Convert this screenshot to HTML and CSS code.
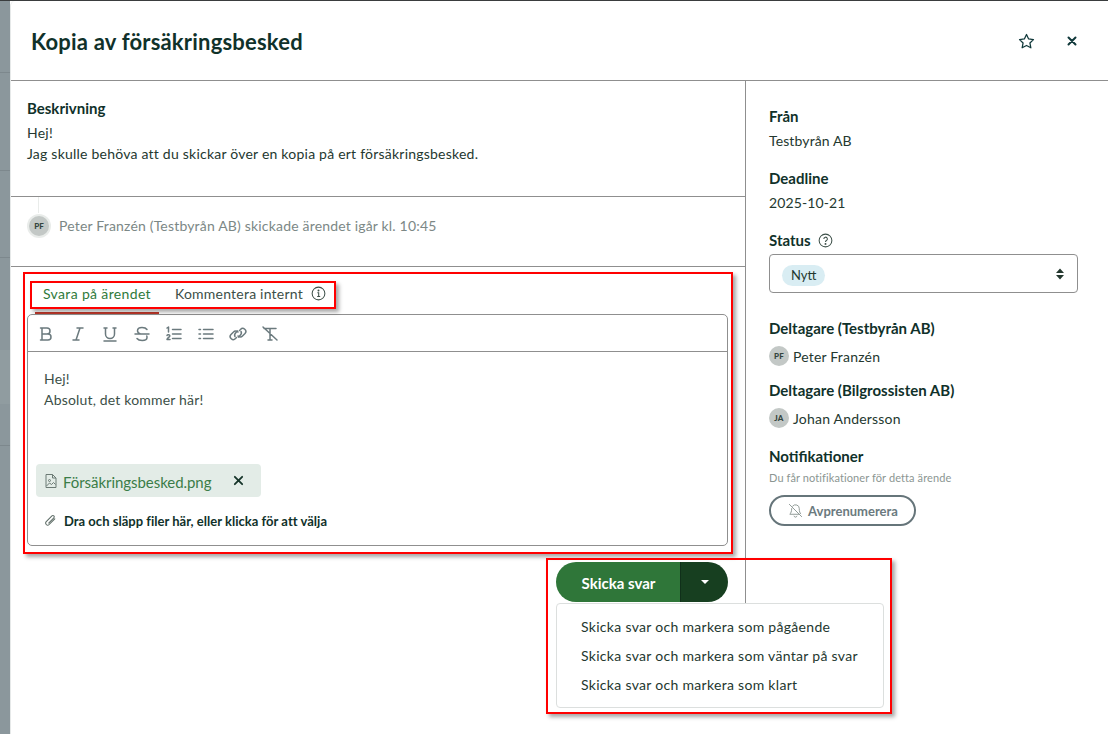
FILE: index.html
```html
<!DOCTYPE html>
<html lang="sv">
<head>
<meta charset="utf-8">
<title>Kopia av försäkringsbesked</title>
<link rel="stylesheet" href="styles.css">
</head>
<body>
<div class="backdrop">
  <div class="bd bd1"></div>
  <div class="bd bd2"></div>
  <div class="bd bd3"></div>
  <div class="bd bd4"></div>
  <div class="bd bd5"></div>
  <div class="bd bd6"></div>
</div>
<main class="modal">
  <header class="modal-head">
    <h1>Kopia av försäkringsbesked</h1>
    <div class="head-actions">
      <svg class="star" width="19" height="19" viewBox="0 0 24 24" fill="none" stroke="#10383a" stroke-width="1.6" stroke-linejoin="round"><path d="M12 3.200l2.700 5.600 6.100.8-4.500 4.200 1.200 6.100L12 17l-5.500 2.900 1.200-6.100-4.500-4.200 6.100-.8z"/></svg>
      <svg class="close" width="10" height="10" viewBox="0 0 10 10" stroke="#10383a" stroke-width="2" stroke-linecap="round"><path d="M1.500 1.500l7 7M8.500 1.500l-7 7"/></svg>
    </div>
  </header>
  <div class="modal-body">
    <section class="main-col">
      <div class="desc">
        <h2>Beskrivning</h2>
        <p>Hej!<br>Jag skulle behöva att du skickar över en kopia på ert försäkringsbesked.</p>
      </div>
      <div class="log">
        <span class="avatar avatar-log">PF</span>
        <span class="log-text">Peter Franzén (Testbyrån AB) skickade ärendet igår kl. 10:45</span>
      </div>
      <div class="reply">
        <div class="tabs">
          <span class="tab active">Svara på ärendet</span>
          <span class="tab second">Kommentera internt</span>
          <svg class="info" width="15" height="15" viewBox="0 0 16 16" fill="none" stroke="#3c4f48" stroke-width="1.1"><circle cx="8" cy="8" r="6.800"/><path d="M6.800 7.200H8.200V11.200M6.600 11.200H9.800" /><circle cx="8" cy="4.900" r=".5" fill="#3c4f48"/></svg>
        </div>
        <div class="editor">
          <div class="toolbar">
            <svg class="tool" viewBox="0 0 18 18"><path d="M5 3h5a3 3 0 0 1 0 6H5zM5 9h6a3 3 0 0 1 0 6H5zM3.500 3H5M3.500 15H5"/></svg>
            <svg class="tool" viewBox="0 0 18 18"><path d="M8 3h6M4 15h6M11 3L7 15"/></svg>
            <svg class="tool" viewBox="0 0 18 18"><path d="M4.500 3v6a4.500 4.500 0 0 0 9 0V3M3 3h3M12 3h3M3 16h12"/></svg>
            <svg class="tool" viewBox="0 0 18 18"><path d="M14 4.500C13 3 11 2.500 9 2.500c-2.500 0-4.500 1.200-4.500 3.200 0 1.500 1 2.500 3 3.300M2 9h14M13.800 11c.2 .5 .2 1 .2 1.500 0 2-2 3-4.800 3-2.200 0-4.200-.6-5.200-2"/></svg>
            <svg class="tool" viewBox="0 0 18 18"><path d="M7.500 4.500H16M7.500 9H16M7.500 13.500H16"/><path d="M2 3l1.500-1v5M2 10.500c.3-1 3-1 2.800.5 0 1-2.800 2-2.800 3.500h3"/></svg>
            <svg class="tool" viewBox="0 0 18 18"><path d="M6.500 4.500H16M6.500 9H16M6.500 13.500H16"/><path d="M2 4.500h1.500M2 9h1.500M2 13.500h1.500"/></svg>
            <svg class="tool" viewBox="0 0 18 18"><path d="M7.500 12.500l-1 1a3 3 0 0 1-4.500-4l2.500-2.500a3 3 0 0 1 4.500 0M10.500 5.500l1-1a3 3 0 0 1 4.500 4L13.500 11a3 3 0 0 1-4.500 0"/><path d="M6 11.500c-1-1.500 0-3 1-4l1.500-1.500M12 6.500c1 1.500 0 3-1 4L9.500 12"/></svg>
            <svg class="tool" viewBox="0 0 18 18"><path d="M3 3.500h12M9 3.500V15M7 15h4M2 2l14 13"/></svg>
          </div>
          <div class="editor-text">
            <p>Hej!<br>Absolut, det kommer här!</p>
          </div>
          <div class="attachment">
            <svg class="file-icon" width="14" height="16" viewBox="0 0 14 16" fill="none" stroke="#6b7a74" stroke-width="1"><path d="M2 1.500h6.500L12 5v9.500H2zM8.500 1.500V5H12"/><circle cx="5.500" cy="7.500" r="1"/><path d="M2.500 13l3-3 2 1.500 2-2 2 2"/></svg>
            <span class="file-name">Försäkringsbesked.png</span>
            <svg class="file-x" width="11" height="11" viewBox="0 0 12 12" stroke="#16352a" stroke-width="2" stroke-linecap="round"><path d="M2 2l8 8M10 2l-8 8"/></svg>
          </div>
          <div class="drop">
            <svg width="14" height="14" viewBox="0 0 16 16" fill="none" stroke="#5d6c66" stroke-width="1.200" stroke-linecap="round"><path d="M13.500 5.500L7 12a2.300 2.300 0 0 1-3.300-3.300l6.500-6.500a1.500 1.500 0 0 1 2.200 2.200L6.500 10.300"/></svg>
            <span>Dra och släpp filer här, eller klicka för att välja</span>
          </div>
        </div>
      </div>
    </section>
    <aside class="side">
      <div class="field">
        <h3>Från</h3>
        <p>Testbyrån AB</p>
      </div>
      <div class="field f2">
        <h3>Deadline</h3>
        <p>2025-10-21</p>
      </div>
      <div class="field f3">
        <h3 class="status-h">Status
          <svg width="15" height="15" viewBox="0 0 16 16" fill="none" stroke="#3c4f48" stroke-width="1.100"><circle cx="8" cy="8" r="6.800"/><path d="M6.200 6.300a1.900 1.900 0 1 1 2.800 1.700c-.7.400-1 .8-1 1.500"/><circle cx="8" cy="11.600" r=".5" fill="#3c4f48"/></svg>
        </h3>
        <div class="select">
          <span class="pill">Nytt</span>
          <svg width="10" height="14" viewBox="0 0 10 14" fill="#24382f"><path d="M5 1.500L9 6H1zM5 12.500L1 8h8z"/></svg>
        </div>
      </div>
      <div class="field f4">
        <h3>Deltagare (Testbyrån AB)</h3>
        <div class="person"><span class="avatar">PF</span><span>Peter Franzén</span></div>
      </div>
      <div class="field f5">
        <h3>Deltagare (Bilgrossisten AB)</h3>
        <div class="person"><span class="avatar">JA</span><span>Johan Andersson</span></div>
      </div>
      <div class="field f6">
        <h3>Notifikationer</h3>
        <p class="note">Du får notifikationer för detta ärende</p>
        <button class="unsub">
          <svg width="17" height="17" viewBox="0 0 18 18" fill="none" stroke="#8b9692" stroke-width="1" stroke-linecap="round"><path d="M2.500 2.500l13 13M6 4.300A4 4 0 0 1 13 7c0 3 .5 4.500 1.500 5.500M5 7c0 3-1 4.800-2 6h10M7.500 15a1.600 1.600 0 0 0 3 0"/></svg>
          Avprenumerera
        </button>
      </div>
    </aside>
  </div>
  <div class="send-area">
    <div class="send-btn">
      <span class="send-main">Skicka svar</span>
      <span class="send-caret"><i></i></span>
    </div>
    <div class="menu">
      <span>Skicka svar och markera som pågående</span>
      <span>Skicka svar och markera som väntar på svar</span>
      <span>Skicka svar och markera som klart</span>
    </div>
  </div>
</main>
<div class="mark mark-editor"></div>
<div class="mark mark-tabs"></div>
<div class="mark mark-send"></div>
</body>
</html>
```

FILE: styles.css
```css
* { box-sizing: border-box; }
html, body { margin: 0; height: 100%; }
body {
  width: 1108px; height: 734px; overflow: hidden; display: flex;
  background: #fff;
  border-top: 1px solid #3a3d3e;
  font-family: "Lato", "Liberation Sans", sans-serif;
  color: #24382f; position: relative;
}
h1, h2, h3, p { margin: 0; }
.backdrop { width: 10px; flex: none; background: #8b979c; display: flex; flex-direction: column; }
.bd { border-bottom: 1px solid #7d888d; }
.bd1 { height: 72px; }
.bd2 { height: 98px; }
.bd3 { height: 87px; }
.bd4 { height: 92px; border-bottom: 0; }
.bd5 { height: 54px; background: #909ca0; border-bottom: 0; }
.bd6 { height: 42px; }
.modal { flex: 1; position: relative; background: #fff; border-left: 1px solid #e6e9e9; border-top-left-radius: 5px; display: flex; flex-direction: column; }
.modal-head { height: 80px; flex: none; border-bottom: 1px solid #8f8f8f; display: flex; align-items: center; justify-content: space-between; padding: 1px 31px 0 20px; }
h1 { font-size: 22px; font-weight: 700; color: #10312a; letter-spacing: .2px; }
.head-actions { display: flex; align-items: center; gap: 31px; margin-top: -1px; }
.star { margin-top: 1px; }
.modal-body { flex: 1; display: flex; min-height: 0; }
.main-col { width: 735px; flex: none; border-right: 1px solid #8f8f8f; height: 523px; display: flex; flex-direction: column; }
.desc { height: 116px; border-bottom: 1px solid #8f8f8f; padding: 18px 17px 0 16px; }
h2, h3 { font-size: 15px; font-weight: 700; color: #10312a; line-height: 18px; }
.desc p { font-size: 14px; line-height: 21px; margin-top: 5px; letter-spacing: .225px; }
.log { height: 70px; border-bottom: 1px solid #8f8f8f; display: flex; align-items: center; gap: 10px; padding: 0 17px 12px 18px; position: relative; }
.log::before { content: ""; position: absolute; left: 27px; top: 0; width: 1px; height: 16px; background: #e9ecea; }
.log-text { font-size: 14px; color: #7c8886; letter-spacing: .18px; }
.avatar { width: 20px; height: 20px; border-radius: 50%; background: #c3c8c6; color: #33443e; font-size: 8px; font-weight: 900; display: inline-flex; align-items: center; justify-content: center; flex: none; }
.avatar-log { box-shadow: 0 0 0 2px #e9ecea; }
.reply { padding: 0 17px 0 16px; flex: 1; display: flex; flex-direction: column; }
.tabs { display: flex; align-items: center; height: 47px; padding-top: 8px; font-size: 14px; }
.tab { padding: 0 8px; height: 39px; line-height: 37px; color: #3c4f48; }
.tab.active { color: #2f7a3b; border-bottom: 2px solid #c0392b; margin: 0 8px; letter-spacing: .35px; }
.tab.second { letter-spacing: .22px; }
.info { margin-bottom: 2px; }
.editor { height: 232px; border: 1px solid #8f8f8f; border-radius: 5px; display: flex; flex-direction: column; }
.toolbar { height: 37px; flex: none; border-bottom: 1px solid #8f8f8f; display: flex; align-items: center; gap: 14px; padding: 1px 9px 0; }
.tool { width: 18px; height: 18px; fill: none; stroke: #6b7a7e; stroke-width: 1.5; stroke-linecap: round; stroke-linejoin: round; }
.editor-text { height: 112px; padding: 16px 16px 0; flex: none; font-size: 14px; line-height: 21px; color: #3c4f48; letter-spacing: .18px; }
.attachment { align-self: flex-start; margin-left: 8px; width: 225px; height: 33px; border-radius: 4px; background: #e3ece7; display: flex; align-items: center; padding: 0 8px; }
.file-icon { flex: none; }
.file-name { font-size: 15px; color: #3b7d48; margin-left: 5px; flex: 1; padding-top: 3px; letter-spacing: -.05px; }
.file-x { margin-right: 9px; }
.drop { display: flex; align-items: center; gap: 7px; height: 42px; padding: 5px 0 0 15px; font-size: 13px; font-weight: 700; color: #10312a; letter-spacing: .02px; }
.side { flex: 1; padding: 26px 30px 0 23px; }
.field p { font-size: 14px; line-height: 20px; margin-top: 6px; letter-spacing: .12px; }
.f2 { margin-top: 18px; }
.f3 { margin-top: 18px; }
.status-h { display: flex; align-items: center; gap: 7px; }
.select { margin-top: 5px; height: 39px; border: 1px solid #8f8f8f; border-radius: 4px; display: flex; align-items: center; justify-content: space-between; padding: 0 12px; }
.pill { background: #d9edf3; border-radius: 11px; padding: 0 9px; height: 21px; line-height: 21px; font-size: 13px; margin-top: 3px; }
.f4 { margin-top: 26px; }
.f5 { margin-top: 15px; }
.f6 { margin-top: 19px; }
.person { display: flex; align-items: center; gap: 4px; font-size: 14px; margin-top: 9px; letter-spacing: .2px; }
.field .note { font-size: 11px; color: #8b9692; line-height: 14px; margin-top: 6px; letter-spacing: .1px; }
.unsub { margin-top: 10px; width: 147px; height: 31px; border: 2px solid #66757a; border-radius: 16px; background: #fff; display: flex; align-items: center; justify-content: center; gap: 4px; font: 700 13px "Lato", sans-serif; color: #6b7a7e; padding: 0; }
.send-area { position: absolute; left: 545px; top: 561px; width: 328px; }
.send-btn { width: 172px; height: 40px; display: flex; border-radius: 20px; overflow: hidden; }
.send-main { width: 124px; background: #2f7639; color: #fff; font-size: 15px; font-weight: 700; display: flex; align-items: center; justify-content: center; padding: 1px 0 0 1px; }
.send-caret { flex: 1; background: #173f20; border-left: 1px solid #10301a; display: flex; align-items: center; justify-content: center; }
.send-caret i { border: 4px solid transparent; border-top: 4px solid #fff; border-bottom: 0; }
.menu { margin-top: 1px; height: 105px; background: #fff; border: 1px solid #dcdfde; border-radius: 4px; display: flex; flex-direction: column; justify-content: center; gap: 8px; padding: 0 24px; font-size: 14px; letter-spacing: .3px; line-height: 21px; color: #24382f; }
.mark { position: absolute; border: 2px solid #f00; box-shadow: 3px 3px 4px rgba(0,0,0,.35); }
.mark-editor { left: 23px; top: 271px; width: 710px; height: 282px; }
.mark-tabs { left: 30px; top: 280px; width: 306px; height: 28px; }
.mark-send { left: 546px; top: 557px; width: 346px; height: 156px; }
```
